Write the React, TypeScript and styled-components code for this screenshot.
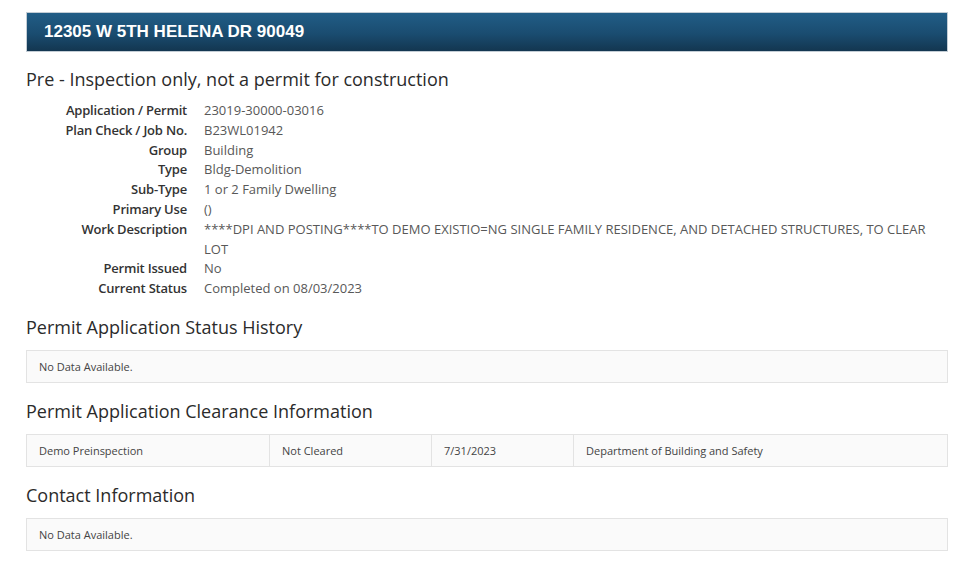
import React from 'react';
import styled, {createGlobalStyle} from 'styled-components';

const GlobalStyle = createGlobalStyle`
    body {
        margin: 0;
        background: #ffffff;
        font-family: "Open Sans", "Liberation Sans", sans-serif;
        color: #333333;
    }
`;

const Page = styled.div`
    padding: 12px 27px 20px 26px;
`;

const AddressBar = styled.div`
    height: 38px;
    display: flex;
    align-items: center;
    padding: 0 17px;
    background: linear-gradient(to bottom, #215d86 0%, #1a4c70 55%, #133650 100%);
    border: 1px solid #c3cdd5;
    color: #ffffff;
    font-family: "Liberation Sans", Arial, sans-serif;
    font-weight: bold;
    font-size: 17px;
`;

const Title = styled.h1`
    margin: 15px 0 10px 0;
    font-size: 18px;
    font-weight: normal;
    line-height: 24px;
    color: #2b2b2b;
`;

const Details = styled.div`
    display: grid;
    grid-template-columns: 161px 1fr;
    column-gap: 17px;
    font-size: 13px;
    line-height: 19.8px;
`;

const Label = styled.div`
    text-align: right;
    font-weight: 600;
    color: #333333;
    letter-spacing: -0.2px;
`;

const Value = styled.div`
    color: #585858;
    padding-right: 10px;
`;

const SectionTitle = styled.h2`
    margin: 16px 0 11px 0;
    font-size: 18px;
    font-weight: normal;
    line-height: 24px;
    color: #2b2b2b;
`;

const Box = styled.div`
    height: 33px;
    display: flex;
    align-items: center;
    background: #fafafa;
    border: 1px solid #e3e3e3;
    box-sizing: border-box;
    font-size: 11px;
    color: #444444;
`;

const Cell = styled.div<{ $width?: number }>`
    height: 100%;
    display: flex;
    align-items: center;
    padding: 0 12px;
    box-sizing: border-box;
    flex: ${props => props.$width ? `0 0 ${props.$width}px` : '1'};
    border-left: 1px solid #e3e3e3;

    &:first-child {
        border-left: none;
    }
`;

const details: [string, string][] = [
    ['Application / Permit', '23019-30000-03016'],
    ['Plan Check / Job No.', 'B23WL01942'],
    ['Group', 'Building'],
    ['Type', 'Bldg-Demolition'],
    ['Sub-Type', '1 or 2 Family Dwelling'],
    ['Primary Use', '()'],
    ['Work Description', '****DPI AND POSTING****TO DEMO EXISTIO=NG SINGLE FAMILY RESIDENCE, AND DETACHED STRUCTURES, TO CLEAR LOT'],
    ['Permit Issued', 'No'],
    ['Current Status', 'Completed on 08/03/2023'],
];

const App = () => {
    return (
        <Page>
            <GlobalStyle/>
            <AddressBar>12305 W 5TH HELENA DR 90049</AddressBar>
            <Title>Pre - Inspection only, not a permit for construction</Title>
            <Details>
                {details.map(([label, value]) => (
                    <React.Fragment key={label}>
                        <Label>{label}</Label>
                        <Value>{value}</Value>
                    </React.Fragment>
                ))}
            </Details>
            <SectionTitle>Permit Application Status History</SectionTitle>
            <Box>
                <Cell>No Data Available.</Cell>
            </Box>
            <SectionTitle>Permit Application Clearance Information</SectionTitle>
            <Box>
                <Cell $width={242}>Demo Preinspection</Cell>
                <Cell $width={162}>Not Cleared</Cell>
                <Cell $width={142}>7/31/2023</Cell>
                <Cell>Department of Building and Safety</Cell>
            </Box>
            <SectionTitle>Contact Information</SectionTitle>
            <Box>
                <Cell>No Data Available.</Cell>
            </Box>
        </Page>
    );
};

export default App;
